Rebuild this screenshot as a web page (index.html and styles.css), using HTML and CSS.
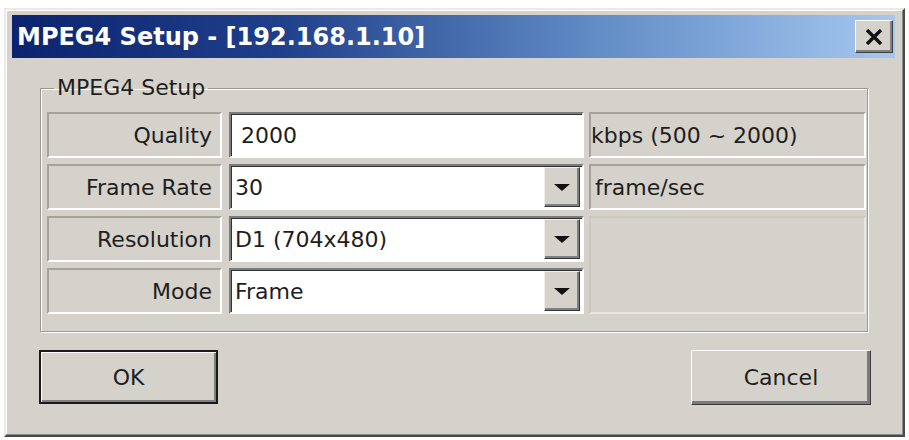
FILE: index.html
```html
<!DOCTYPE html>
<html lang="en">
<head>
    <meta charset="UTF-8">
    <title>MPEG4 Setup</title>
    <link rel="stylesheet" href="styles.css">
</head>
<body>
    <div class="window">
        <div class="titlebar">
            <span class="title">MPEG4 Setup - [192.168.1.10]</span>
            <button class="close" aria-label="Close">
                <svg width="18" height="16" viewBox="0 0 18 16">
                    <path d="M2 1 L16 15 M16 1 L2 15" stroke="#111" stroke-width="3.4" fill="none"/>
                </svg>
            </button>
        </div>

        <fieldset class="group">
            <legend>MPEG4 Setup</legend>
            <div class="grid">
                <div class="label">Quality</div>
                <div class="field"><span class="text">2000</span></div>
                <div class="unit unit-first">kbps (500 ~ 2000)</div>

                <div class="label">Frame Rate</div>
                <div class="field combo"><span class="text">30</span><span class="drop"></span></div>
                <div class="unit">frame/sec</div>

                <div class="label">Resolution</div>
                <div class="field combo"><span class="text">D1 (704x480)</span><span class="drop"></span></div>
                <div class="unit empty"></div>

                <div class="label">Mode</div>
                <div class="field combo"><span class="text">Frame</span><span class="drop"></span></div>
            </div>
        </fieldset>

        <div class="actions">
            <button class="btn default">OK</button>
            <button class="btn cancel">Cancel</button>
        </div>
    </div>
</body>
</html>
```

FILE: styles.css
```css
* {
    box-sizing: border-box;
}

body {
    margin: 0;
    background: #fff;
    font-family: "DejaVu Sans", Verdana, sans-serif;
    color: #1e1e1e;
}

.window {
    margin: 8px 0 0 4px;
    width: 901px;
    height: 429px;
    padding: 5px 8px 0 6px;
    background: #d5d2cc;
    border: 2px solid;
    border-color: #eceae6 #4a4a4a #4a4a4a #eceae6;
    box-shadow: inset -1px -1px #8a8a88, inset 1px 1px #fff;
}

/* barra de titulo */
.titlebar {
    height: 43px;
    display: flex;
    align-items: center;
    justify-content: space-between;
    padding-left: 5px;
    background: linear-gradient(to right, #0c2470 0%, #1f3f8a 30%, #5f8ac4 65%, #a5c8f0 100%);
}

.title {
    color: #fff;
    font-weight: bold;
    font-size: 24px;
}

.close {
    width: 38px;
    height: 33px;
    margin-right: 2px;
    padding: 0;
    display: flex;
    align-items: center;
    justify-content: center;
    background: #d5d2cc;
    border: 1px solid;
    border-color: #fff #404040 #404040 #fff;
    box-shadow: inset -2px -2px #808080;
}

/* grupo */
.group {
    margin: 17px 0 0 28px;
    width: 828px;
    padding: 11px 1px 17px 6px;
    border: 1px solid #9a9892;
    box-shadow: 1px 1px #fff, inset 1px 1px #fff;
}

.group legend {
    margin-left: 7px;
    padding: 0 3px;
    font-size: 22px;
    line-height: 26px;
}

.grid {
    display: grid;
    grid-template-columns: 175px 355px 275px;
    grid-template-rows: repeat(4, 46px);
    column-gap: 7px;
    row-gap: 6px;
    font-size: 22px;
}

.grid > div {
    display: flex;
    align-items: center;
}

.label {
    justify-content: flex-end;
    padding-right: 8px;
    border: 2px solid;
    border-color: #a5a29b #fff #fff #a5a29b;
}

.field {
    background: #fff;
    border: 2px solid;
    border-color: #7c7c7c #fff #fff #7c7c7c;
    box-shadow: inset 1px 1px #333;
    padding-left: 10px;
}

.field.combo {
    padding: 1px 2px 1px 4px;
}

.combo .text {
    flex: 1;
}

.drop {
    width: 36px;
    height: 100%;
    display: flex;
    align-items: center;
    justify-content: center;
    background: #d5d2cc;
    border: 1px solid;
    border-color: #f0eeea #333 #333 #f0eeea;
    box-shadow: inset -2px -2px #808080;
}

.drop::after {
    content: "";
    border-left: 8px solid transparent;
    border-right: 8px solid transparent;
    border-top: 7px solid #111;
}

.unit {
    margin-left: -2px;
    padding-left: 4px;
    border: 2px solid;
    border-color: #a5a29b #fff #fff #a5a29b;
}

.unit-first {
    padding-left: 0;
}

.unit.empty {
    grid-row: span 2;
    grid-column: 3;
    border-color: #cbc8c1 #e8e6e2 #e8e6e2 #cbc8c1;
}

/* botones */
.actions {
    margin: 18px 0 0 27px;
    width: 832px;
    display: flex;
    justify-content: space-between;
    align-items: flex-start;
}

.btn {
    font-family: "DejaVu Sans", Verdana, sans-serif;
    font-size: 22px;
    color: #1e1e1e;
    background: #d5d2cc;
    width: 180px;
    height: 55px;
    padding: 0;
}

.btn.default {
    width: 179px;
    height: 54px;
    border: 2px solid #1a1a1a;
    box-shadow: inset 1px 1px #fff, inset -2px -2px #808080;
}

.btn.cancel {
    border: 1px solid;
    border-color: #fff #3a3a3a #3a3a3a #fff;
    box-shadow: inset -3px -3px #7a7a7a;
}
```
